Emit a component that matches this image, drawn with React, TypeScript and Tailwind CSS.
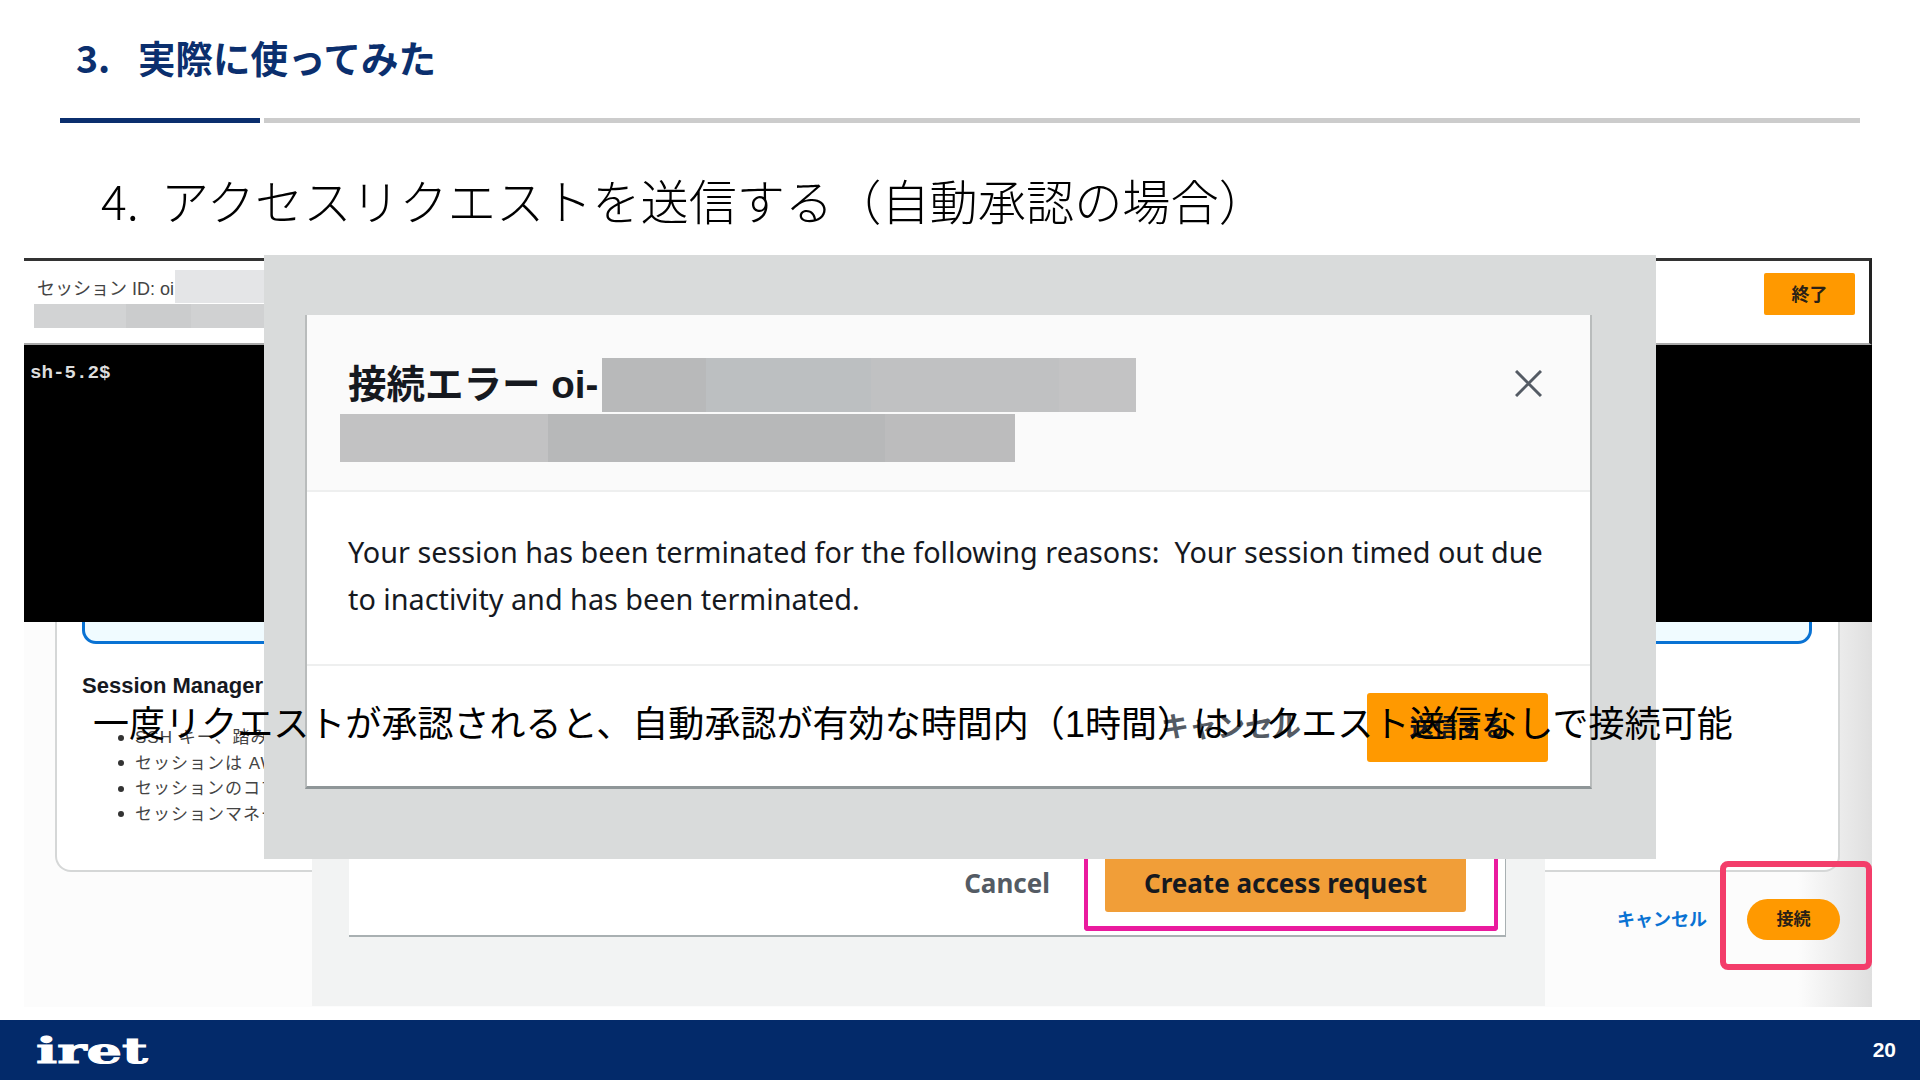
const bullets = [
  "SSH キー、踏み台サーバーは不要です",
  "セッションは AWS CloudTrail に記録されます",
  "セッションのコマンドはログに記録できます",
  "セッションマネージャーの設定が必要です",
];

function Redacted({ parts, className }: { parts: { w: string; color: string }[]; className: string }) {
  return (
    <div className={`flex ${className}`}>
      {parts.map((p, i) => (
        <div key={i} className={`h-full ${p.w} ${p.color}`} />
      ))}
    </div>
  );
}

function TerminalScreenshot() {
  return (
    <div className="ml-[24px] mt-[3px] flex h-[749px] w-[1848px] flex-col">
      {/* session header */}
      <div className="flex h-[87px] shrink-0 justify-between border-t-[3px] border-r-[3px] border-b-[2px] border-t-[#333333] border-r-[#222222] border-b-[#a9a9a9] bg-white">
        <div className="pt-[9px]">
          <div className="flex h-[33px] items-center pl-[13px]">
            <span className="w-[138px] shrink-0 pt-[4px] text-[18px] leading-none whitespace-nowrap text-[#444444]">セッション ID: oi</span>
            <div className="h-full w-[89px] bg-[#e4e5e7]" />
          </div>
          <Redacted
            className="ml-[10px] mt-[1px] h-[24px]"
            parts={[
              { w: "w-[92px]", color: "bg-[#d2d3d4]" },
              { w: "w-[65px]", color: "bg-[#cbcccd]" },
              { w: "w-[73px]", color: "bg-[#d0d1d2]" },
            ]}
          />
        </div>
        <button className="mr-[14px] mt-[12px] h-[42px] w-[91px] rounded-[2px] bg-[#ff9900] pt-[2px] text-[18px] font-bold text-[#2a2116]">
          終了
        </button>
      </div>
      {/* terminal */}
      <div className="h-[277px] shrink-0 bg-black pl-[6px] pt-[16px] font-['Liberation_Mono',monospace] text-[19.2px] font-bold leading-[24px] text-[#dddddd]">
        sh-5.2$
      </div>
      {/* connect page */}
      <div className="relative flex-1 bg-[linear-gradient(90deg,#fcfcfc_96%,#dfdfdf_100%)]">
        <div className="ml-[31px] h-[250px] w-[1785px] rounded-b-[16px] border-x-2 border-b-2 border-[#d5d7d7] bg-white pl-[25px] pr-[26px]">
          <div className="h-[22px] rounded-b-[14px] border-x-[3px] border-b-[3px] border-[#0972d3] bg-[#f0fbff]" />
          <div className="mt-[27px] whitespace-nowrap text-[22px] font-bold leading-[30px] text-[#16191f]">Session Manager の利点</div>
          <ul className="ml-[36px] mt-[24px] flex flex-col">
            {bullets.map((b) => (
              <li key={b} className="flex h-[25.5px] items-center gap-[11px] whitespace-nowrap text-[17px] leading-none tracking-[1px] text-[#444444]">
                <span className="size-[6px] shrink-0 rounded-full bg-[#333333]" />
                {b}
              </li>
            ))}
          </ul>
        </div>
        <div className="mt-[27px] flex items-center justify-end gap-[40px] pr-[32px]">
          <span className="text-[18px] font-bold leading-none text-[#0972d3]">キャンセル</span>
          <button className="h-[41px] w-[93px] rounded-full bg-[#ff9900] text-[17px] font-bold text-[#2a2116]">接続</button>
        </div>
        {/* annotation */}
        <div className="absolute right-0 top-[239px] h-[109px] w-[152px] rounded-[8px] border-[6px] border-[#f33d6a]" />
      </div>
    </div>
  );
}

function RequestScreenshot() {
  return (
    <div className="absolute left-[312px] top-[604px] h-[147px] w-[1233px] bg-[#f2f3f3] pl-[37px]">
      <div className="flex h-[78px] w-[1157px] items-start justify-end border-b-2 border-r border-[#a9b0b2] bg-white">
        <span className="mr-[34px] mt-[6px] font-['Noto_Sans',sans-serif] text-[26px] font-bold leading-[36px] text-[#545b64]">Cancel</span>
        <div className="mr-[7px] h-[72px] w-[414px] rounded-b-[4px] border-x-[4px] border-b-[5px] border-[#ea1a9e] pl-[17px]">
          <button className="h-[53px] w-[361px] rounded-b-[3px] bg-[#f19e38] pb-[4px] font-['Noto_Sans',sans-serif] text-[26px] font-bold text-[#16191f]">
            Create access request
          </button>
        </div>
      </div>
    </div>
  );
}

function ErrorDialog() {
  return (
    <div className="absolute left-[264px] top-0 h-[604px] w-[1392px] bg-[#d9dbdb] pl-[41px] pt-[60px]">
      <div className="flex h-[474px] w-[1287px] flex-col border-x-2 border-b-[3px] border-x-[#b9bcbc] border-b-[#8f9698] bg-white">
        <div className="h-[177px] shrink-0 border-b-2 border-[#eeefef] bg-[#fafafa] pt-[43px]">
          <div className="flex h-[54px] items-center">
            <span className="w-[295px] shrink-0 whitespace-nowrap pl-[41px] text-[38.5px] font-bold leading-none text-[#16191f]">接続エラー oi-</span>
            <Redacted
              className="h-full"
              parts={[
                { w: "w-[104px]", color: "bg-[#b8b9ba]" },
                { w: "w-[165px]", color: "bg-[#bcbfc1]" },
                { w: "w-[188px]", color: "bg-[#c0c1c2]" },
                { w: "w-[77px]", color: "bg-[#c3c3c4]" },
              ]}
            />
            <svg viewBox="0 0 27 27" className="ml-auto mr-[48px] size-[27px] -translate-y-[2px] text-[#545b64]" fill="none" stroke="currentColor" strokeWidth="3">
              <path d="M1 1l25 25M26 1L1 26" />
            </svg>
          </div>
          <Redacted
            className="ml-[33px] mt-[2px] h-[48px]"
            parts={[
              { w: "w-[208px]", color: "bg-[#c2c2c3]" },
              { w: "w-[337px]", color: "bg-[#b7b8b9]" },
              { w: "w-[130px]", color: "bg-[#bcbcbd]" },
            ]}
          />
        </div>
        <div className="h-[174px] shrink-0 border-b-2 border-[#eeefef] pl-[41px] pt-[36px] font-['Noto_Sans',sans-serif] text-[28.8px] leading-[47px] text-[#16191f]">
          Your session has been terminated for the following reasons:&nbsp; Your session timed out due
          <br />
          to inactivity and has been terminated.
        </div>
        <div className="flex flex-1 items-start justify-end pr-[42px] pt-[27px]">
          <span className="mr-[66px] mt-[17px] text-[28px] font-bold leading-[36px] text-[#545b64]">キャンセル</span>
          <button className="h-[69px] w-[181px] rounded-[3px] bg-[#ff9900] text-[24px] font-bold text-[#16191f]">送信する</button>
        </div>
      </div>
    </div>
  );
}

export default function App() {
  return (
    <div className="flex h-[1080px] w-[1920px] flex-col overflow-hidden bg-white font-['Liberation_Sans','Noto_Sans_CJK_JP',sans-serif]">
      <div className="flex h-[118px] shrink-0 items-center pb-[4px] pl-[76px] font-['Noto_Sans_CJK_JP',sans-serif] text-[37.5px] font-bold text-[#0b2f6e]">
        <span className="w-[62px]">3.</span>
        <span>実際に使ってみた</span>
      </div>
      <div className="ml-[60px] flex h-[5px] w-[1800px] shrink-0 gap-[4px]">
        <div className="h-full w-[200px] bg-[#0b2f6e]" />
        <div className="h-full flex-1 bg-[#cccccc]" />
      </div>
      <h2 className="mb-[26px] ml-[101px] mt-[46px] flex h-[60px] shrink-0 whitespace-nowrap font-['Noto_Sans_CJK_JP',sans-serif] text-[48.2px] font-light leading-[60px] text-black">
        <span className="w-[60px]">4.</span>
        <span>アクセスリクエストを送信する（自動承認の場合）</span>
      </h2>

      <div className="relative flex-1">
        <TerminalScreenshot />
        <RequestScreenshot />
        <ErrorDialog />
        <p className="absolute left-[93px] top-[450px] whitespace-nowrap text-[36px] leading-[40px] tracking-[0.05px] text-black">
          一度リクエストが承認されると、自動承認が有効な時間内（1時間）はリクエスト送信なしで接続可能
        </p>
      </div>

      <div className="flex h-[60px] shrink-0 items-center justify-between bg-[#032a6a] pl-[36px] pr-[24px] text-white">
        <span className="origin-left scale-x-[1.55] font-['DejaVu_Serif',serif] text-[36px] font-bold leading-none [-webkit-text-stroke:1px_white]">iret</span>
        <span className="text-[21px] font-bold">20</span>
      </div>
    </div>
  );
}
